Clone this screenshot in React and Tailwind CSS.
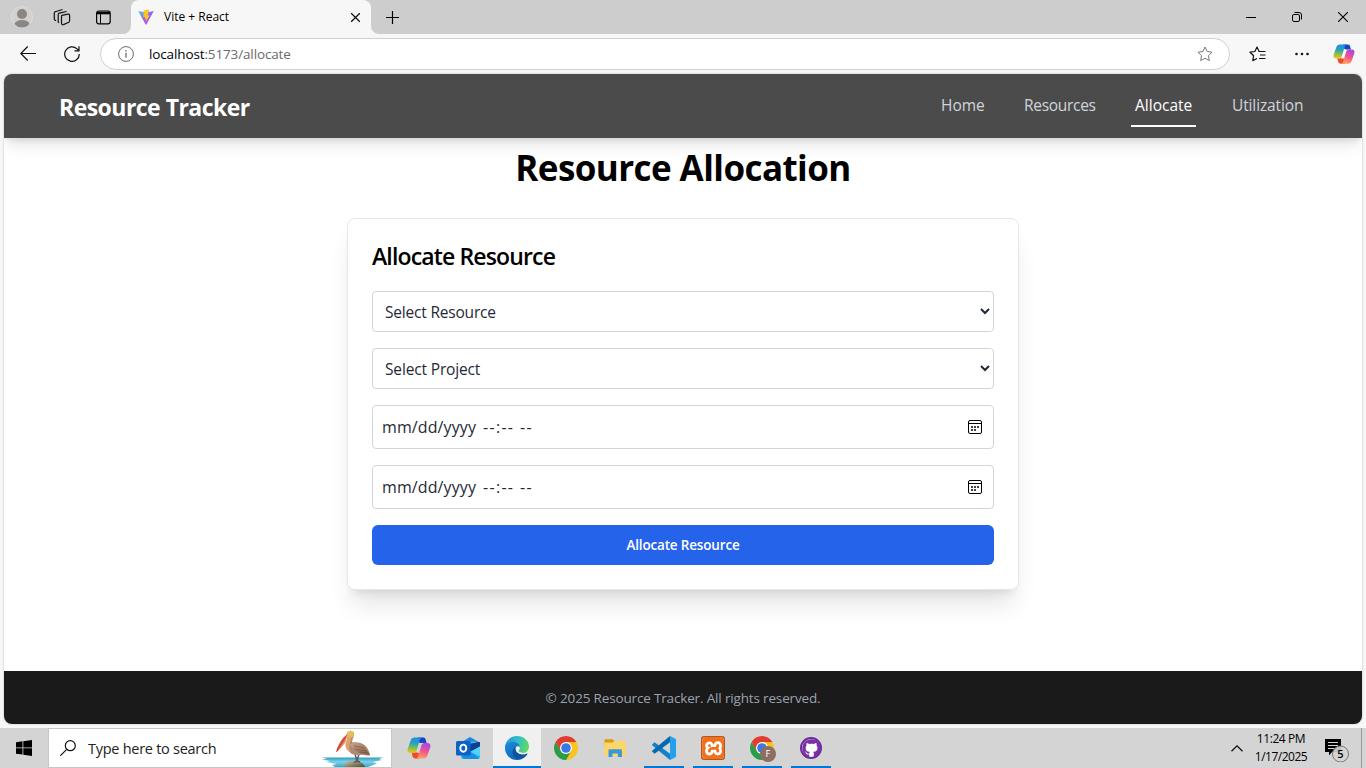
import React from 'react';
import { SiXampp } from 'react-icons/si';
import { FaGithub } from 'react-icons/fa';

function Copilot({ id, size }) {
  return (
    <svg width={size} height={size} viewBox="0 0 24 24">
      <defs>
        <linearGradient id={id + 'a'} x1="0.4" y1="0" x2="0.3" y2="1">
          <stop offset="0" stopColor="#1b8fe8" />
          <stop offset="0.4" stopColor="#2aa5b5" />
          <stop offset="0.7" stopColor="#8cc04a" />
          <stop offset="1" stopColor="#f6c50f" />
        </linearGradient>
        <linearGradient id={id + 'b'} x1="0.7" y1="0" x2="0.4" y2="1">
          <stop offset="0" stopColor="#a448e8" />
          <stop offset="0.5" stopColor="#ee5093" />
          <stop offset="1" stopColor="#ffa15c" />
        </linearGradient>
      </defs>
      <path d="M11 1.500h5.300c1.400 0 2 .9 2.400 2.200l.9 3.300h-5.300c-1.800 0-2.700-1-3.200-2.600z" fill="#1745bd" />
      <path d="M13 22.500H8.200c-1.500 0-2.200-.9-2.600-2.200L4.600 16.500h5.300c1.800 0 2.600 1 3.100 2.700z" fill="#f0492f" />
      <path d="M7.700 1.500h7.200c-1.300.5-1.800 1.500-2.300 3.100L9.800 14c-.5 1.600-1.300 3-3.100 3H3.500C1.200 17 0 15.200.7 12.800L3.600 4.700C4.300 2.500 5.500 1.500 7.700 1.500z" fill={`url(#${id}a)`} />
      <path d="M16.300 22.500H9.100c1.300-.5 1.800-1.500 2.300-3.100L14.200 10c.5-1.600 1.300-3 3.100-3h3.200c2.300 0 3.500 1.800 2.800 4.200l-2.900 8.100c-.7 2.200-1.900 3.200-4.100 3.200z" fill={`url(#${id}b)`} />
    </svg>
  );
}

function Chrome({ badge }) {
  return (
    <svg width="28" height="28" viewBox="0 0 28 28" className="overflow-visible">
      <path d="M14 14V8h10.390A12 12 0 0 1 14 26z" fill="#fcc31e" />
      <path d="M14 14l5.200 3L14 26A12 12 0 0 1 3.610 8L8.800 17z" fill="#2a9d48" />
      <path d="M3.610 8A12 12 0 0 1 24.390 8H14L8.800 17z" fill="#e33b2e" />
      <circle cx="14" cy="14" r="6" fill="#fff" />
      <circle cx="14" cy="14" r="4.800" fill="#3b78e7" />
      {badge && (
        <g>
          <circle cx="20" cy="20" r="8" fill="#8d6e63" />
          <text x="20" y="23.300" textAnchor="middle" fontSize="9.500" fontFamily="Open Sans, sans-serif" fill="#fff">F</text>
        </g>
      )}
    </svg>
  );
}

function Edge() {
  return (
    <svg width="24" height="24" viewBox="0 0 24 24">
      <defs>
        <linearGradient id="edgeTop" x1="0" y1="0.400" x2="1" y2="0.600">
          <stop offset="0" stopColor="#2496d8" />
          <stop offset="0.500" stopColor="#32bfc8" />
          <stop offset="1" stopColor="#66dc55" />
        </linearGradient>
        <linearGradient id="edgeLeft" x1="0" y1="0" x2="0.500" y2="1">
          <stop offset="0" stopColor="#1b8fdc" />
          <stop offset="1" stopColor="#1266b8" />
        </linearGradient>
      </defs>
      <path d="M0 11.500C0 5 5.500 0 12 0c7 0 12 5 12 10.500 0 4-3 6.500-6.500 6.500-2.500 0-4-.8-4-2L8 8z" fill="url(#edgeTop)" />
      <path d="M0 11.800C.2 8 3.600 5.800 7.300 5.800c4.200 0 7.200 2.300 7.700 5.200-1-1-2-1.400-3.200-1.300-2.300 1-3.500 3-3.500 5.500 0 4 2.800 7.300 6.200 8.500-.8.200-1.600.3-2.500.3A12 12 0 0 1 0 11.800z" fill="url(#edgeLeft)" />
      <path d="M11.800 9.700c-2.400.9-4.300 3.300-4.300 6.200 0 4.300 3.500 7.600 7 7.800 3.300-.7 6-2.600 7.900-5.500.3-.5 0-.8-.5-.6-1.300.6-2.500.9-4 .9-4.200 0-7-2.800-7-5.400 0-1.400.5-2.500 1.700-3z" fill="#0e559e" />
      <path d="M10.600 12.500c.2-1.900 1.300-2.500 2.400-2.300 1.200.3 1.900 1.200 1.900 2.200s-1.300 1.300-1.300 2.400c0 1.300 1.500 2 3.900 2-3.500 2-7-1-6.900-4.300z" fill="#f0f0f0" />
    </svg>
  );
}

function Outlook() {
  return (
    <svg width="24" height="24" viewBox="0 0 24 24">
      <path d="M5 6.500L14 1l9.600 5.500V14H5z" fill="#1f86d8" />
      <path d="M8 5.500h12v9H8z" fill="#35b8f1" />
      <path d="M14 8l9.700-2v5L15 16z" fill="#103f91" />
      <path d="M5 12l19-2v10.500a2.500 2.500 0 0 1-2.500 2.500h-14A2.500 2.500 0 0 1 5 20.500z" fill="#2db5ee" />
      <path d="M14 8l10-2v4.500L14 16z" fill="#103f91" />
      <path d="M14 16l10-5.500v9.500z" fill="#4fd3f7" />
      <path d="M6 20l9-4 8 6c-.5.600-1 1-1.600 1H7.500z" fill="#1a8fe0" />
      <rect x="0" y="5" width="14.600" height="14.500" rx="1.500" fill="#0a63c4" />
      <ellipse cx="7.300" cy="12.200" rx="3" ry="3.600" fill="none" stroke="#fff" strokeWidth="1.900" />
    </svg>
  );
}

function Folder() {
  return (
    <svg width="24" height="24" viewBox="0 0 24 24">
      <path d="M1.500 4.500c0-.8.500-1.300 1.300-1.300h7l1.700 2.300h10v5H1.500z" fill="#dc9a0c" />
      <path d="M1.500 6.500h8l2-1.500h10.200c.6 0 1 .4 1 1V20H1.500z" fill="#fdd668" />
      <path d="M5.500 21v-6.500c0-.7.500-1.200 1.200-1.200h11c.7 0 1.200.5 1.200 1.200V21h-4v-3.500H9.500V21z" fill="#3a97dc" />
    </svg>
  );
}

function VSCode() {
  return (
    <svg width="24" height="24" viewBox="0 0 24 24">
      <path d="M.4 8.200L2 6.800c.4-.3.900-.3 1.300 0L18 17.800V24L.4 9.600c-.5-.4-.5-1 0-1.400z" fill="#0e84cc" />
      <path d="M.4 15.800L2 17.200c.4.300.9.300 1.300 0L18 6.200V0L.4 14.400c-.5.400-.5 1 0 1.400z" fill="#0769ae" />
      <path d="M18 0l5 2.500c.6.300 1 .8 1 1.500v16c0 .7-.4 1.200-1 1.500L18 24z" fill="#26a0ed" />
    </svg>
  );
}

function Pelican() {
  return (
    <svg width="64" height="38" viewBox="0 0 64 38" className="shrink-0">
      <defs>
        <linearGradient id="sea" x1="0" y1="0" x2="0" y2="1">
          <stop offset="0" stopColor="#2f9bc0" />
          <stop offset="0.450" stopColor="#7fd0e6" />
          <stop offset="1" stopColor="#3aa8c8" />
        </linearGradient>
        <linearGradient id="rock" x1="0" y1="0" x2="1" y2="1">
          <stop offset="0" stopColor="#d3c8a6" />
          <stop offset="1" stopColor="#4e4634" />
        </linearGradient>
        <linearGradient id="wing" x1="0" y1="0" x2="1" y2="1">
          <stop offset="0" stopColor="#c9a78c" />
          <stop offset="1" stopColor="#7d5644" />
        </linearGradient>
      </defs>
      <path d="M1 28.500h61l-4 1.500 3 1-9 2 4 1.500-9 3.500H14l-3-2 5-1-11-2 4-1-8-1.500 5-.8z" fill="url(#sea)" />
      <path d="M23 38c1-4 5-6.500 10-6.500s10 3 11 6.500z" fill="url(#rock)" />
      <path d="M34 25l2 7-3 1.500M38 25l-2 7 3 1" stroke="#56575f" strokeWidth="1.400" fill="none" />
      <path d="M27 4c2-2 6-2 6 1.500 0 3-2.500 5-1.500 8 3-.5 8-.5 12 2.500 3 2.500 4.500 6 5.800 10.500-4 .2-6-.3-8-.8-5 .8-9.300.5-12.300-2.200-3.500-3.200-3-8-1.500-12 .7-2 .6-3.500-.5-5z" fill="#b08a72" />
      <path d="M29 15c5-2 12-1 15 3l5 8c-5-1-12-1-16-5-2-2-4-4-4-6z" fill="url(#wing)" />
      <path d="M33 17l10 2M34 20l11 2M38 23l9 1" stroke="#765240" strokeWidth=".6" />
      <path d="M26 7c.8 3-2 6-1.500 10 .4 3 2.500 5.500 5 6-2.500-5-1-8 .4-12 .6-2 .8-4-.9-5z" fill="#dfa36d" />
      <path d="M25.500 5c0-3 3-4 5-3 2.800 0 3.200 3 2 5.500-1.500 1-6 1.500-7-.5z" fill="#edb94a" />
      <path d="M26.500 5L24 13l-7.500 9.500-1.500.5c1-5 4-10 7-14z" fill="#cf4f35" />
      <path d="M26 7l-2 7-7 8z" fill="#ef8b65" />
      <circle cx="28" cy="4" r="1.300" fill="#e6edf3" />
      <circle cx="28" cy="4" r=".6" fill="#26333d" />
    </svg>
  );
}

function DateField() {
  return (
    <div className="flex h-11 items-center rounded border border-[#d1d5db] pl-[9px] pr-[11px] text-[16px] leading-6 text-[#1f2937]">
      <span className="w-[101px] tracking-[0.1px]">mm/dd/yyyy</span>
      <span className="w-[37px] tracking-[1.3px]">--:--</span>
      <span className="grow tracking-[1.3px]">--</span>
      <svg width="14" height="14" viewBox="0 0 14 14" fill="none" stroke="#000">
        <rect x=".5" y=".5" width="13" height="13" rx="1.500" />
        <path d="M1 3.500h12" />
        <path d="M3 7h2M6 7h2M9 7h2M3 10h2M6 10h2" stroke="#444" strokeWidth="2" />
      </svg>
    </div>
  );
}

function SelectField({ label, tracking }) {
  return (
    <select className={'h-[41px] w-full rounded border border-[#d1d5db] bg-white p-2 text-[15.5px] text-[#1f2937] ' + tracking}>
      <option>{label}</option>
    </select>
  );
}

function Task({ children, running, active }) {
  return (
    <div className={'flex h-10 w-12 flex-col items-center ' + (active ? 'bg-[#f0f0f0]' : '')}>
      <div className="flex h-[38px] grow items-center justify-center pt-0.5">{children}</div>
      <div className={'h-0.5 ' + (active ? 'w-12 ' : 'w-10 ') + (running || active ? 'bg-[#0078d7]' : '')} />
    </div>
  );
}

function TabStrip() {
  return (
    <div className="flex h-[34px] bg-[#cdcdcd]">
      <div className="flex w-[123px] items-center pl-[11px]">
        <svg width="22" height="22" viewBox="0 0 22 22">
          <circle cx="11" cy="11" r="10.500" fill="#d3d0cd" stroke="#dedbd8" />
          <circle cx="11" cy="8" r="5" fill="#8b8683" />
          <path d="M3.500 18c1-3 4-4 7.500-4s6.500 1 7.500 4c-2 2.500-4.500 3.500-7.500 3.500S5.500 20.500 3.500 18z" fill="#8b8683" />
        </svg>
        <svg className="ml-[20px]" width="18" height="18" viewBox="0 0 18 18" fill="none" stroke="#111" strokeWidth="1.200" strokeLinejoin="round">
          <path d="M9 7.300l6-1.200c.9-.2 1.600.4 1.600 1.300v5.400c0 .6-.3 1.100-.8 1.400l-5.300 2.400c-1 .4-2-.2-2-1.300V8.300c0-.5.200-.9.500-1z" />
          <path d="M6 14.700l-.8-.6V6.700c0-.7.400-1.300 1.100-1.500l7.200-1.700" />
          <path d="M3 12.700l-1.200-.8c-.3-.2-.5-.6-.5-1V5.200c0-.7.400-1.300 1.100-1.500L9.500 1.500" />
        </svg>
        <svg className="ml-[25px]" width="15" height="15" viewBox="0 0 15 15" fill="none" stroke="#000">
          <rect x=".6" y="1" width="13.600" height="12.800" rx="2.200" strokeWidth="1.200" />
          <path d="M1 3h13" strokeWidth="2.600" />
          <path d="M4.500 4v9.500" />
        </svg>
      </div>
      <div className="flex w-2 items-end bg-[#f7f7f7]">
        <div className="h-full w-full rounded-br-lg bg-[#cdcdcd]" />
      </div>
      <div className="flex w-[240px] items-center rounded-t-lg bg-[#f7f7f7] pl-[7px] pr-[10px]">
        <svg width="16" height="16" viewBox="0 0 16 16">
          <defs>
            <linearGradient id="vite" x1="0" y1="0" x2="0.600" y2="1">
              <stop offset="0" stopColor="#41d1ff" />
              <stop offset="0.500" stopColor="#8d62fb" />
              <stop offset="1" stopColor="#bd34fe" />
            </linearGradient>
          </defs>
          <path d="M.2 2L8 3.400 15.800 2 8.300 15.600c-.1.300-.5.300-.6 0z" fill="url(#vite)" />
          <path d="M11.300.4L5.600 1.600l-.4 6.600 2-.4-.5 2.400 1.400-.4-.8 4L11.800 6.200l-2.200.4.700-2.400z" fill="#ffc61a" />
        </svg>
        <span className="ml-[10px] grow text-[12px] text-black">Vite + React</span>
        <svg width="11" height="11" viewBox="0 0 11 11" stroke="#111" strokeWidth="1.300"><path d="M1.200 1.200l8.600 8.600M9.800 1.200L1.200 9.800" /></svg>
      </div>
      <div className="w-2 bg-[#f7f7f7]">
        <div className="h-full w-full rounded-bl-lg bg-[#cdcdcd]" />
      </div>
      <div className="flex grow items-center pl-[7px] pr-[18px]">
        <svg width="13" height="13" viewBox="0 0 13 13" stroke="#000" strokeWidth="1.200"><path d="M6.500 0v13M0 6.500h13" /></svg>
        <div className="grow" />
        <svg width="10" height="10" viewBox="0 0 10 10" stroke="#000"><path d="M0 5.500h10" /></svg>
        <svg className="ml-[36px]" width="10" height="10" viewBox="0 0 10 10" fill="none" stroke="#000">
          <rect x=".5" y="2.500" width="7" height="7" rx="1.500" />
          <path d="M2.500.5H7A2.500 2.500 0 0 1 9.500 3v4.500" />
        </svg>
        <svg className="ml-[36px]" width="10" height="10" viewBox="0 0 10 10" stroke="#000" strokeWidth="1.100"><path d="M0 0l10 10M10 0L0 10" /></svg>
      </div>
    </div>
  );
}

const STAR = 'M8 1l2.100 4.500 4.900.7-3.500 3.500.8 4.900L8 12.300l-4.300 2.300.8-4.900L1 6.200l4.900-.7z';

function AddressBar() {
  return (
    <div className="flex h-10 items-center bg-[#f7f7f7] pl-5 pr-[10px]">
      <svg width="16" height="16" viewBox="0 0 16 16" fill="none" stroke="#111" strokeWidth="1.200"><path d="M16 7.500H.8M7.700.5l-6.900 7 6.900 7" /></svg>
      <svg className="ml-[28px]" width="16" height="16" viewBox="0 0 16 16" fill="none" stroke="#111" strokeWidth="1.200"><path d="M15.300 8A7.300 7.300 0 1 1 12.800 2.600L14.900 4.600M15 .3v4.500h-4.500" /></svg>
      <div className="ml-5 flex h-8 w-[1130px] items-center rounded-full border border-[#d0d0d0] bg-white pl-[17px] pr-[16px]">
        <svg width="16" height="16" viewBox="0 0 16 16" fill="none" stroke="#6b6b6b">
          <circle cx="8" cy="8" r="7.400" />
          <path d="M8 6.800v5M8 4v1.400" strokeWidth="1.300" />
        </svg>
        <span className="ml-[15px] grow text-[13.5px] tracking-[-0.13px] text-[#6b6b6b]"><span className="text-black">localhost</span>:5173/allocate</span>
        <svg width="16" height="16" viewBox="0 0 16 16" fill="none" stroke="#777" strokeLinejoin="round"><path d={STAR} /></svg>
      </div>
      <svg className="ml-[19px]" width="17" height="16" viewBox="0 0 17 16" fill="none" stroke="#111" strokeWidth="1.200" strokeLinejoin="round">
        <path d="M8 12.500l-4.200 2.100.8-4.900L1 6.200l4.900-.7L8 1l2.100 4.500h6.400M11 9h5.500M10 12.500h6.500" />
      </svg>
      <svg className="ml-[29px]" width="14" height="4" viewBox="0 0 14 4" fill="#111"><circle cx="1.500" cy="2" r="1.300" /><circle cx="7" cy="2" r="1.300" /><circle cx="12.500" cy="2" r="1.300" /></svg>
      <div className="ml-[24px]"><Copilot id="bar" size={22} /></div>
    </div>
  );
}

function Page() {
  return (
    <div className="flex h-[654px] bg-[#f7f7f7] px-1 pb-1">
      <div className="flex w-full flex-col overflow-hidden rounded-lg bg-white shadow-[0_0_2px_rgba(0,0,0,0.3)]">
        <nav className="relative z-10 flex h-16 shrink-0 items-center justify-between bg-[#4b4b4b] pl-[55px] pr-[55px] shadow-[0_10px_15px_-3px_rgba(0,0,0,0.1),0_4px_6px_-2px_rgba(0,0,0,0.1)]">
          <span className="pt-[3px] text-[23px] font-bold tracking-[-0.53px] text-white">Resource Tracker</span>
          <div className="flex h-16 gap-8 text-[15.5px] text-[#d1d5db]">
            <span className="w-[51px] px-1 pt-[19px] leading-6">Home</span>
            <span className="w-[79px] px-1 pt-[19px] leading-6 tracking-[-0.3px]">Resources</span>
            <span className="mb-[11px] w-[65px] border-b-2 border-white px-1 pt-[19px] leading-6 text-white">Allocate</span>
            <span className="w-[79px] px-1 pt-[19px] leading-6 tracking-[-0.13px]">Utilization</span>
          </div>
        </nav>
        <main className="flex grow flex-col items-center pt-2">
          <h1 className="h-11 text-[35px] font-bold leading-[44px] tracking-[-0.58px] text-black">Resource Allocation</h1>
          <section className="mt-7 flex h-[372px] w-[672px] flex-col gap-4 rounded-lg border border-[#e5e7eb] bg-white p-6 shadow-[0_20px_25px_-5px_rgba(0,0,0,0.1),0_8px_10px_-6px_rgba(0,0,0,0.1)]">
            <h2 className="mb-1 h-7 text-[23px] font-semibold leading-[26px] tracking-[-0.85px] text-black">Allocate Resource</h2>
            <SelectField label="Select Resource" tracking="tracking-[-0.2px]" />
            <SelectField label="Select Project" tracking="tracking-[-0.15px]" />
            <DateField />
            <DateField />
            <button className="h-10 rounded-md bg-[#2563eb] text-[13.5px] font-semibold tracking-[-0.17px] text-white">Allocate Resource</button>
          </section>
        </main>
        <footer className="flex h-[53px] shrink-0 items-center justify-center bg-[#1a1a1a] pt-0.5 text-[13.5px] tracking-[-0.16px] text-[#9ca3af]">© 2025 Resource Tracker. All rights reserved.</footer>
      </div>
    </div>
  );
}

function Taskbar() {
  return (
    <div className="flex h-10 items-center bg-[#d4d4d4]">
      <div className="flex w-12 justify-center">
        <svg width="16" height="16" viewBox="0 0 16 16"><path d="M0 2.300L6.500 1.300v6.200H0zM7.300 1.200L16 0v7.500H7.300zM0 8.300h6.500v6.300L0 13.700zM7.300 8.300H16V16l-8.700-1.300z" /></svg>
      </div>
      <div className="flex h-10 w-[344px] items-center border border-[#c6c6c6] bg-white pl-[11px] pr-[6px]">
        <svg width="16" height="16" viewBox="0 0 16 16" fill="none" stroke="#111" strokeWidth="1.200"><circle cx="10.300" cy="5.700" r="5" /><path d="M6.700 9.300L.3 15.700" /></svg>
        <span className="ml-[12px] grow pt-px text-[14.5px] tracking-[-0.27px] text-[#222]">Type here to search</span>
        <Pelican />
      </div>
      <div className="ml-[3px] flex gap-px">
        <Task><Copilot id="task" size={24} /></Task>
        <Task><Outlook /></Task>
        <Task active><Edge /></Task>
        <Task><Chrome /></Task>
        <Task><Folder /></Task>
        <Task running><VSCode /></Task>
        <Task running>
          <div className="flex size-6 items-center justify-center rounded-[3px] bg-[#b5561c]">
            <div className="flex size-[22px] items-center justify-center overflow-hidden rounded-sm bg-white"><SiXampp className="size-[23px] shrink-0" color="#f0701c" /></div>
          </div>
        </Task>
        <Task running><Chrome badge /></Task>
        <Task running>
          <div className="flex size-[22px] items-center justify-center rounded-full border-2 border-[#6a2a98] bg-white"><FaGithub className="size-[19px] shrink-0" color="#7a2fa8" /></div>
        </Task>
      </div>
      <div className="grow" />
      <svg width="12" height="7" viewBox="0 0 12 7" fill="none" stroke="#111" strokeWidth="1.300"><path d="M.5 6.300L6 .9l5.500 5.400" /></svg>
      <div className="ml-[10px] flex w-[56px] flex-col items-center text-[12px] leading-[18px] text-black">
        <span className="tracking-[-0.4px]">11:24 PM</span>
        <span className="tracking-[-0.5px]">1/17/2025</span>
      </div>
      <svg className="ml-[15px]" width="26" height="28" viewBox="0 0 26 28">
        <path d="M1 5h16v13H8l-3 3.500V18H1z" fill="#000" />
        <path d="M4 8.500h10M4 11.500h10M4 14.500h6" stroke="#d4d4d4" strokeWidth="1.200" />
        <circle cx="16.500" cy="20" r="8" fill="#d4d4d4" fillOpacity=".9" stroke="#777" />
        <text x="16.500" y="24" textAnchor="middle" fontSize="11" fontWeight="600" fontFamily="Open Sans, sans-serif">5</text>
      </svg>
      <div className="ml-[11px] h-10 w-[5px] border-l border-[#999]" />
    </div>
  );
}

export default function App() {
  return (
    <div className="flex h-[768px] w-[1366px] flex-col overflow-hidden whitespace-nowrap font-['Open_Sans',sans-serif]">
      <TabStrip />
      <AddressBar />
      <Page />
      <Taskbar />
    </div>
  );
}
